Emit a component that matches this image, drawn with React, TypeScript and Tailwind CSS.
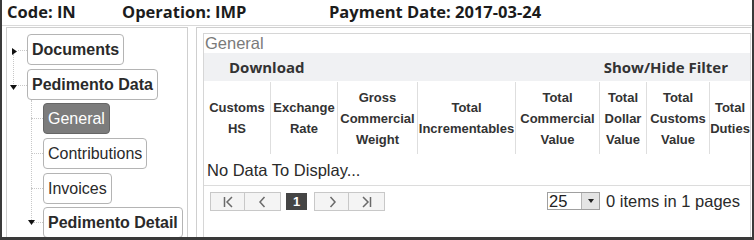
import React from "react";

const Dotted = ({ className }: { className: string }) => <div className={className} />;

const Tri = ({ dir, className }: { dir: "right" | "down"; className: string }) =>
  dir === "right" ? (
    <svg className={className} width="5" height="7" viewBox="0 0 5 7">
      <polygon points="0,0 5,3.5 0,7" fill="#111" />
    </svg>
  ) : (
    <svg className={className} width="7" height="5" viewBox="0 0 7 5">
      <polygon points="0,0 7,0 3.5,5" fill="#111" />
    </svg>
  );

const PagerIcon = ({ kind }: { kind: "first" | "prev" | "next" | "last" }) => {
  const d =
    kind === "first"
      ? "M2.5 1v10 M10 1 L5 6 L10 11"
      : kind === "prev"
      ? "M7.5 1 L3 6 L7.5 11"
      : kind === "next"
      ? "M4.5 1 L9 6 L4.5 11"
      : "M2 1 L7 6 L2 11 M9.5 1v10";
  return (
    <svg width="12" height="12" viewBox="0 0 12 12">
      <path d={d} stroke="#6a6a6a" strokeWidth="1.5" fill="none" />
    </svg>
  );
};

export default function App() {
  return (
    <div className="w-[754px] h-[240px] overflow-hidden bg-white border-l-2 border-r-2 border-b-[3px] border-[#3a3a3a] flex flex-col font-['Liberation_Sans',Arial,sans-serif] text-[#333]">
      {/* Header */}
      <div className="h-[26px] shrink-0 border-b border-[#d9d9d9] flex items-start pt-[0px] pl-[5px] font-['Open_Sans',sans-serif] font-bold text-[16.5px] leading-[23px] text-[#1c1c1c] whitespace-nowrap">
        <span className="w-[115px]">Code: IN</span>
        <span className="w-[207px]">Operation: IMP</span>
        <span>Payment Date: 2017-03-24</span>
      </div>

      {/* Body */}
      <div className="flex flex-1 min-h-0 pt-[1px]">
        {/* Left tree panel */}
        <div className="ml-[4px] w-[182px] shrink-0 border border-b-0 border-[#cfcfcf]">
          <div className="relative pt-[6px]">
            <Dotted className="absolute left-[6px] top-[26px] h-[32px] border-l border-dotted border-[#c8c8c8]" />
            <Dotted className="absolute left-[24px] top-[72px] h-[122px] border-l border-dotted border-[#c8c8c8]" />

            {/* Documents */}
            <div className="flex items-center h-[31px]">
              <div className="relative w-[20px] h-full">
                <Tri dir="right" className="absolute left-[5px] top-[14px]" />
                <Dotted className="absolute left-[11px] top-[16px] w-[9px] border-t border-dotted border-[#c8c8c8]" />
              </div>
              <div className="h-full px-[4px] border border-[#b4b4b4] rounded-[4px] font-bold text-[16px] leading-[29px] text-[#2a2a2a] whitespace-nowrap">
                Documents
              </div>
            </div>

            {/* Pedimento Data */}
            <div className="flex items-center h-[31px] mt-[4px]">
              <div className="relative w-[20px] h-full">
                <Tri dir="down" className="absolute left-[3px] top-[16px]" />
                <Dotted className="absolute left-[11px] top-[16px] w-[9px] border-t border-dotted border-[#c8c8c8]" />
              </div>
              <div className="h-full px-[4px] border border-[#b4b4b4] rounded-[4px] font-bold text-[16px] leading-[29px] text-[#2a2a2a] whitespace-nowrap">
                Pedimento Data
              </div>
            </div>

            {/* Children */}
            <div className="mt-[3px]">
              <div className="flex items-center h-[31px]">
                <div className="relative w-[36px] h-full">
                  <Dotted className="absolute left-[24px] top-[15px] w-[12px] border-t border-dotted border-[#c8c8c8]" />
                </div>
                <div className="h-full px-[4px] border border-[#666] rounded-[4px] bg-[#7c7c7c] text-white text-[16px] leading-[29px] whitespace-nowrap">
                  General
                </div>
              </div>
              <div className="flex items-center h-[31px] mt-[4px]">
                <div className="relative w-[36px] h-full">
                  <Dotted className="absolute left-[24px] top-[15px] w-[12px] border-t border-dotted border-[#c8c8c8]" />
                </div>
                <div className="h-full px-[4px] border border-[#b4b4b4] rounded-[4px] text-[16px] leading-[29px] text-[#2a2a2a] whitespace-nowrap">
                  Contributions
                </div>
              </div>
              <div className="flex items-center h-[31px] mt-[4px]">
                <div className="relative w-[36px] h-full">
                  <Dotted className="absolute left-[24px] top-[15px] w-[12px] border-t border-dotted border-[#c8c8c8]" />
                </div>
                <div className="h-full px-[4px] border border-[#b4b4b4] rounded-[4px] text-[16px] leading-[29px] text-[#2a2a2a] whitespace-nowrap">
                  Invoices
                </div>
              </div>
              <div className="flex items-center h-[31px] mt-[3px]">
                <div className="relative w-[36px] h-full">
                  <Dotted className="absolute left-[26px] top-[15px] w-[10px] border-t border-dotted border-[#c8c8c8]" />
                  <Tri dir="down" className="absolute left-[21px] top-[13px]" />
                </div>
                <div className="h-full px-[4px] border border-[#b4b4b4] rounded-[4px] font-bold text-[16px] leading-[29px] text-[#2a2a2a] whitespace-nowrap">
                  Pedimento Detail
                </div>
              </div>
            </div>
          </div>
        </div>

        {/* Right panel */}
        <div className="ml-[8px] mr-[1px] flex-1 min-w-0 border-l border-t border-[#cfcfcf] pl-[6px] pt-[5px]">
          <div className="h-full border border-b-0 border-[#d6d6d6] flex flex-col">
            <div className="h-[19px] shrink-0 pl-[1px] text-[16.5px] leading-[18px] text-[#7a7a7a]">General</div>

            <div className="h-[28px] shrink-0 bg-[#f0f1f3] flex items-center justify-between pl-[25px] pr-[22px] font-['Open_Sans',sans-serif] font-bold text-[15px] text-[#333]">
              <span>Download</span>
              <span>Show/Hide Filter</span>
            </div>

            <div className="h-[74px] shrink-0 flex py-[1px] font-bold text-[13px] leading-[21px] text-[#333] text-center whitespace-nowrap">
              <div className="w-[66px] flex items-center justify-center">
                <div>Customs<br />HS</div>
              </div>
              <div className="w-[67px] flex items-center justify-center border-l border-[#dedede]">
                <div>Exchange<br />Rate</div>
              </div>
              <div className="w-[80px] flex items-center justify-center border-l border-[#dedede]">
                <div>Gross<br />Commercial<br />Weight</div>
              </div>
              <div className="w-[98px] flex items-center justify-center border-l border-[#dedede]">
                <div>Total<br />Incrementables</div>
              </div>
              <div className="w-[84px] flex items-center justify-center border-l border-[#dedede]">
                <div>Total<br />Commercial<br />Value</div>
              </div>
              <div className="w-[47px] flex items-center justify-center border-l border-[#dedede]">
                <div>Total<br />Dollar<br />Value</div>
              </div>
              <div className="w-[63px] flex items-center justify-center border-l border-[#dedede]">
                <div>Total<br />Customs<br />Value</div>
              </div>
              <div className="w-[41px] flex items-center justify-center border-l border-[#dedede]">
                <div>Total<br />Duties</div>
              </div>
            </div>

            <div className="h-[31px] shrink-0 border-b border-[#dcdcdc] pl-[3px] text-[16.5px] leading-[30px] text-[#2a2a2a]">
              No Data To Display...
            </div>

            <div className="flex items-start justify-between pt-[6px] pl-[6px] pr-[10px]">
              <div className="flex items-center">
                <div className="flex h-[19px] border border-[#c8c8c8] bg-[#f4f4f4]">
                  <span className="w-[34px] flex items-center justify-center border-r border-[#c8c8c8]">
                    <PagerIcon kind="first" />
                  </span>
                  <span className="w-[35px] flex items-center justify-center">
                    <PagerIcon kind="prev" />
                  </span>
                </div>
                <span className="ml-[5px] w-[21px] h-[17px] bg-[#454545] text-white text-[13px] font-bold flex items-center justify-center leading-none">
                  1
                </span>
                <div className="ml-[7px] flex h-[19px] border border-[#c8c8c8] bg-[#f4f4f4]">
                  <span className="w-[34px] flex items-center justify-center border-r border-[#c8c8c8]">
                    <PagerIcon kind="next" />
                  </span>
                  <span className="w-[35px] flex items-center justify-center">
                    <PagerIcon kind="last" />
                  </span>
                </div>
              </div>

              <div className="flex items-center">
                <div className="flex w-[53px] h-[18px] border border-[#a0a0a0] bg-white">
                  <span className="flex-1 pl-[1px] text-[16.5px] leading-[16px] text-[#222]">25</span>
                  <span className="w-[18px] bg-[#e4e4e4] border-l border-[#b4b4b4] flex items-center justify-center">
                    <svg width="6" height="4" viewBox="0 0 6 4">
                      <polygon points="0,0 6,0 3,4" fill="#222" />
                    </svg>
                  </span>
                </div>
                <span className="ml-[6px] text-[16.5px] leading-[18px] text-[#2a2a2a] whitespace-nowrap">
                  0 items in 1 pages
                </span>
              </div>
            </div>
          </div>
        </div>
      </div>
    </div>
  );
}
